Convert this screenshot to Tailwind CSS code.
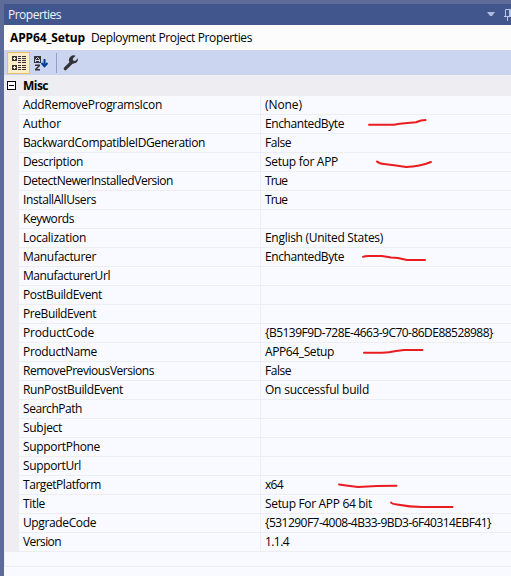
<!DOCTYPE html>
<html lang="en">
<head>
<meta charset="utf-8">
<title>Properties</title>
<script src="https://cdn.jsdelivr.net/npm/@tailwindcss/browser@4"></script>
</head>
<body class="w-[511px] h-[576px] overflow-hidden bg-[#5d6b99] font-['Open_Sans','Noto_Sans',sans-serif] text-[12px] leading-[18px] text-black">
<main class="relative flex h-[576px] flex-col pt-1 pl-1">
  <header class="flex h-[21px] shrink-0 items-center bg-[#40568d] pl-1 text-[#f0f3fb]">
    <h1 data-w="53" class="whitespace-nowrap">Properties</h1>
    <svg class="ml-auto mr-[9px] h-[5px] w-2" viewBox="0 0 8 5" fill="#aebbe0"><path d="M0 0h8L5 4H3z"/></svg>
    <svg class="h-3 w-[7px]" viewBox="0 0 7 12" fill="none" stroke="#bac5e7"><path d="M1.500 7V.5h5V7M0 7.500h7M3.500 8v4M5.500 1v6"/></svg>
  </header>
  <div class="flex h-[25px] shrink-0 items-center gap-[6px] bg-[#fcfcfc] pl-[6px] whitespace-nowrap">
    <span data-w="75" data-weight="bold" class="font-bold">APP64_Setup</span><span data-w="161">Deployment Project Properties</span>
  </div>
  <div class="flex h-[25px] shrink-0 items-center bg-[#ccd5f0] pl-[3px]">
    <div class="flex h-[22px] w-[23px] items-center justify-center border border-[#e5c365] bg-[#fdecc8]">
      <svg class="h-4 w-4" viewBox="0 0 16 16" fill="#333337" shape-rendering="crispEdges"><path d="M1 1h5v5H1zM1 10h5v5H1zM7 1h3v1H7zM11 1h4v1h-4zM7 3h3v1H7zM11 3h4v1h-4zM7 5h3v1H7zM11 5h4v1h-4zM7 7h3v1H7zM11 7h4v1h-4zM7 10h3v1H7zM11 10h4v1h-4zM7 12h3v1H7zM11 12h4v1h-4zM7 14h3v1H7zM11 14h4v1h-4z"/><path fill="#fdecc8" d="M3 2h1v1h1v1H4v1H3V4H2V3h1zM3 11h1v1h1v1H4v1H3v-1H2v-1h1z"/></svg>
    </div>
    <svg class="ml-1 h-4 w-[15px]" viewBox="0 0 15 16"><path fill="#333337" d="M0 1h7v7H0z"/><path d="M1.500 7V4.500L3.500 2.500L5.500 4.500V7M2 5.500h3" fill="none" stroke="#ccd5f0"/><path d="M1 9.500h5v1.500L3 14h3v1.500H1V14l3-3H1z" fill="#333337"/><path d="M10.500 4v7M7.500 8l3 3.200L13.500 8" fill="none" stroke="#00429c" stroke-width="2"/></svg>
    <div class="ml-[7px] h-5 w-px bg-[#8f9fd0]"></div>
    <svg class="ml-[6px] h-4 w-4" viewBox="0 0 16 16"><path d="M2.300 13.700L9 7" stroke="#333337" stroke-width="3.200" stroke-linecap="round"/><path fill="#333337" d="M12.700.8A4.800 4.800 0 0 0 6 6.200 4.800 4.800 0 0 0 14.900 3.300L12.200 6 10 5.500 9.800 3.600z"/></svg>
  </div>
  <section class="flex h-[21px] shrink-0 items-center bg-[#eeeef2] pl-[3px]">
    <div class="flex h-[9px] w-[9px] items-center justify-center border border-black bg-white"><i class="h-px w-[5px] bg-black"></i></div>
    <b data-w="25" data-weight="bold" class="ml-[7px]">Misc</b>
  </section>
  <div id="rows" class="shrink-0 bg-[#eeeef2] pl-[15px]"></div>
  <div class="h-[15px] shrink-0 border-b border-l border-[#eeeef2] bg-[#f9faff]"></div>
  <div class="grow bg-[#f9faff]"></div>
  <svg class="pointer-events-none absolute inset-0 h-[576px] w-[511px]" viewBox="0 0 511 576" fill="none" stroke="#e91c20" stroke-width="2" stroke-linecap="round" stroke-linejoin="round">
    <path d="M369 124.800H394Q400 123.600 405 123.200L416 122.200L421 120.500L425.500 120"/>
    <path d="M377 161.500Q379 163.500 384 164L396 165.500L406 167Q420 166.500 431 162"/>
    <path d="M363 256.800Q365 255.700 371 256H382L391 257.500L398 258L407 260L425 260"/>
    <path d="M364 352.800H382Q389 352.800 396 351L404 350H422.500"/>
    <path d="M339 484.500L346 485.500L358 487L377 486L396.500 485.800"/>
    <path d="M391 502.500Q392 504 397 504.500Q410 507 422 507H452.500"/>
  </svg>
</main>
<template id="row">
  <div class="grid h-[19px] grid-cols-[242px_1fr] border-b border-[#eeeef2] bg-[#f9faff] whitespace-nowrap">
    <div class="border-r border-[#eeeef2] pl-1"><span></span></div>
    <div class="pl-1"><span></span></div>
  </div>
</template>
<script>
const properties = [
  ["AddRemoveProgramsIcon",139,"(None)",37],["Author",38,"EnchantedByte",79],
  ["BackwardCompatibleIDGeneration",182,"False",26],["Description",60,"Setup for APP",73],
  ["DetectNewerInstalledVersion",150,"True",22],["InstallAllUsers",73,"True",22],
  ["Keywords",51,"",0],["Localization",63,"English (United States)",118],
  ["Manufacturer",73,"EnchantedByte",79],["ManufacturerUrl",87,"",0],
  ["PostBuildEvent",79,"",0],["PreBuildEvent",73,"",0],
  ["ProductCode",71,"{B5139F9D-728E-4663-9C70-86DE88528988}",228],["ProductName",74,"APP64_Setup",69],
  ["RemovePreviousVersions",131,"False",26],["RunPostBuildEvent",100,"On successful build",104],
  ["SearchPath",59,"",0],["Subject",39,"",0],["SupportPhone",77,"",0],["SupportUrl",58,"",0],
  ["TargetPlatform",78,"x64",18],["Title",22,"Setup For APP 64 bit",107],
  ["UpgradeCode",73,"{531290F7-4008-4B33-9BD3-6F40314EBF41}",226],["Version",38,"1.1.4",24]
];
const template = document.getElementById("row");
for (const [name, nameWidth, value, valueWidth] of properties) {
  const row = template.content.cloneNode(true);
  const cells = row.querySelectorAll("span");
  cells[0].textContent = name; cells[0].dataset.w = nameWidth;
  cells[1].textContent = value; cells[1].dataset.w = valueWidth;
  document.getElementById("rows").append(row);
}
// Tracks each label so that it occupies its given width.
const pen = document.createElement("canvas").getContext("2d");
for (const el of document.querySelectorAll("[data-w]")) {
  const text = el.textContent;
  if (!text) continue;
  pen.font = (el.dataset.weight || "normal") + " 12px 'Open Sans'";
  el.style.letterSpacing = ((el.dataset.w - pen.measureText(text).width) / text.length) + "px";
}
</script>
</body>
</html>
